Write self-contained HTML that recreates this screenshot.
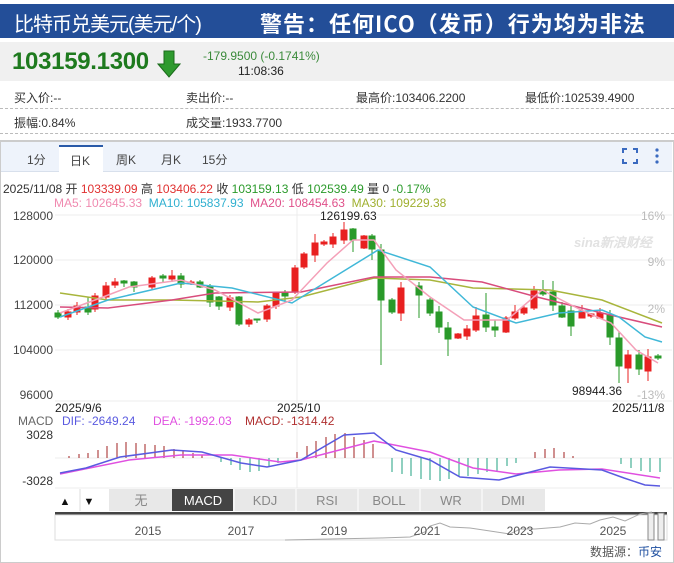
<!DOCTYPE html>
<html><head><meta charset="utf-8"><style>
*{margin:0;padding:0;box-sizing:border-box}
body{width:674px;height:563px;overflow:hidden;background:#fff;font-family:"Liberation Sans","Noto Sans CJK SC",sans-serif;position:relative;font-size:12px;color:#333}
.a{position:absolute;white-space:nowrap}
</style></head><body>
<div class="a" style="left:0;top:4px;width:674px;height:34px;background:#234e98"></div>
<div class="a" style="left:14px;top:8px;color:#fff;font-size:20px;letter-spacing:-1px">比特币兑美元(美元/个)</div>
<div class="a" style="left:260px;top:7px;color:#fff;font-size:22px;font-weight:bold;letter-spacing:1px;font-family:'Noto Sans CJK SC',sans-serif">警告：任何ICO（发币）行为均为非法</div>
<div class="a" style="left:0;top:42px;width:674px;height:39px;background:#f0f0f0"></div>
<div class="a" style="left:12px;top:48px;color:#1e7a1e;font-size:24px;font-weight:bold;letter-spacing:-0.3px">103159.1300</div>
<svg class="a" style="left:157px;top:50px" width="24" height="28"><path d="M7 1h10v13h6L12 27 1 14h6z" fill="#2e9a2e" stroke="#1a6a1a"/></svg>
<div class="a" style="left:203px;top:49px;color:#3a8a3a;font-size:12px">-179.9500 (-0.1741%)</div>
<div class="a" style="left:238px;top:64px;color:#222;font-size:12px">11:08:36</div>
<div class="a" style="left:14px;top:89px">买入价:--</div>
<div class="a" style="left:186px;top:89px">卖出价:--</div>
<div class="a" style="left:356px;top:89px">最高价:103406.2200</div>
<div class="a" style="left:525px;top:89px">最低价:102539.4900</div>
<div class="a" style="left:0;top:108px;width:674px;border-top:1px dashed #bbb"></div>
<div class="a" style="left:14px;top:114px">振幅:0.84%</div>
<div class="a" style="left:186px;top:114px">成交量:1933.7700</div>
<div class="a" style="left:0;top:133px;width:674px;border-top:1px dashed #bbb"></div>
<div class="a" style="left:0;top:140px;width:674px;height:423px;border:1px solid #ccc;border-top:2px solid #ccc"></div>
<div class="a" style="left:1px;top:142px;width:671px;height:30px;background:#eef3fb;border-bottom:1px solid #d8e0ec"></div>
<div class="a" style="left:59px;top:145px;width:44px;height:28px;background:#fff;border-top:2px solid #2a5aa8"></div>
<div class="a" style="left:27px;top:151px;color:#444">1分</div>
<div class="a" style="left:70px;top:152px;color:#444">日K</div>
<div class="a" style="left:116px;top:151px;color:#444">周K</div>
<div class="a" style="left:161px;top:151px;color:#444">月K</div>
<div class="a" style="left:202px;top:151px;color:#444">15分</div>
<svg class="a" style="left:620px;top:146px" width="45" height="20"><path d="M3 7V3h4M13 3h4v4M17 13v4h-4M7 17H3v-4" stroke="#3a6ac0" stroke-width="2" fill="none"/><circle cx="37" cy="4" r="1.6" fill="#3a6ac0"/><circle cx="37" cy="10" r="1.6" fill="#3a6ac0"/><circle cx="37" cy="16" r="1.6" fill="#3a6ac0"/></svg>
<div class="a" style="left:3px;top:180px;font-size:12px;color:#333">2025/11/08 开 <span style="color:#e03030">103339.09</span> 高 <span style="color:#e03030">103406.22</span> 收 <span style="color:#2a9a2a">103159.13</span> 低 <span style="color:#2a9a2a">102539.49</span> 量 0 <span style="color:#2a9a2a">-0.17%</span></div>
<div class="a" style="left:54px;top:196px;font-size:12px"><span style="color:#f08ab0">MA5: 102645.33</span>&nbsp; <span style="color:#30b0d0">MA10: 105837.93</span>&nbsp; <span style="color:#e0508a">MA20: 108454.63</span>&nbsp; <span style="color:#a0b030">MA30: 109229.38</span></div>
<svg class="a" style="left:0;top:0" width="674" height="563" font-family="Liberation Sans,sans-serif" font-size="12">
<g stroke="#ececec"><line x1="55" y1="215" x2="672" y2="215"/><line x1="55" y1="260" x2="672" y2="260"/><line x1="55" y1="305" x2="672" y2="305"/><line x1="55" y1="350" x2="672" y2="350"/><line x1="55" y1="401" x2="672" y2="401"/><line x1="297" y1="208" x2="297" y2="488"/><line x1="55" y1="458" x2="672" y2="458"/><line x1="55" y1="488" x2="672" y2="488"/></g>
<g fill="#444" text-anchor="end"><text x="53" y="220">128000</text><text x="53" y="264">120000</text><text x="53" y="309">112000</text><text x="53" y="354">104000</text><text x="53" y="399">96000</text></g>
<g fill="#bbb" text-anchor="end"><text x="665" y="220">16%</text><text x="665" y="266">9%</text><text x="665" y="313">2%</text><text x="665" y="399">-13%</text></g>
<text x="574" y="247" fill="#e2e2e2" font-size="13" font-style="italic" font-weight="bold">sina新浪财经</text>
<text x="320" y="220" fill="#222">126199.63</text><text x="572" y="395" fill="#222">98944.36</text>
<g id="c">
<g fill="#2a9a2a" stroke="#2a9a2a"><line x1="58" y1="310" x2="58" y2="319"/><rect x="55" y="313" width="6" height="4"/><line x1="88" y1="297" x2="88" y2="315"/><rect x="85" y="307" width="6" height="5"/><line x1="124" y1="280" x2="124" y2="287"/><rect x="121" y="281" width="6" height="2"/><line x1="134" y1="281" x2="134" y2="292"/><rect x="131" y="282" width="6" height="5"/><line x1="163" y1="274" x2="163" y2="283"/><rect x="160" y="276" width="6" height="2"/><line x1="181" y1="273" x2="181" y2="288"/><rect x="178" y="276" width="6" height="8"/><line x1="200" y1="280" x2="200" y2="288"/><rect x="197" y="282" width="6" height="5"/><line x1="210" y1="284" x2="210" y2="307"/><rect x="207" y="286" width="6" height="16"/><line x1="219" y1="296" x2="219" y2="310"/><rect x="216" y="297" width="6" height="9"/><line x1="239" y1="296" x2="239" y2="326"/><rect x="236" y="297" width="6" height="27"/><line x1="257" y1="319" x2="257" y2="323"/><rect x="254" y="319" width="6" height="1"/><line x1="285" y1="290" x2="285" y2="302"/><rect x="282" y="292" width="6" height="4"/><line x1="353" y1="228" x2="353" y2="252"/><rect x="350" y="229" width="6" height="11"/><line x1="372" y1="234" x2="372" y2="260"/><rect x="369" y="236" width="6" height="13"/><line x1="381" y1="244" x2="381" y2="365"/><rect x="378" y="250" width="6" height="50"/><line x1="392" y1="298" x2="392" y2="314"/><rect x="389" y="300" width="6" height="12"/><line x1="419" y1="282" x2="419" y2="318"/><rect x="416" y="286" width="6" height="9"/><line x1="430" y1="298" x2="430" y2="316"/><rect x="427" y="300" width="6" height="13"/><line x1="439" y1="306" x2="439" y2="333"/><rect x="436" y="312" width="6" height="15"/><line x1="448" y1="322" x2="448" y2="356"/><rect x="445" y="328" width="6" height="11"/><line x1="486" y1="293" x2="486" y2="332"/><rect x="483" y="315" width="6" height="12"/><line x1="495" y1="320" x2="495" y2="337"/><rect x="492" y="327" width="6" height="3"/><line x1="543" y1="280" x2="543" y2="296"/><rect x="540" y="291" width="6" height="3"/><line x1="553" y1="281" x2="553" y2="311"/><rect x="550" y="292" width="6" height="13"/><line x1="562" y1="302" x2="562" y2="318"/><rect x="559" y="306" width="6" height="11"/><line x1="571" y1="305" x2="571" y2="336"/><rect x="568" y="311" width="6" height="15"/><line x1="610" y1="310" x2="610" y2="345"/><rect x="607" y="315" width="6" height="22"/><line x1="619" y1="332" x2="619" y2="383"/><rect x="616" y="338" width="6" height="28"/><line x1="639" y1="350" x2="639" y2="375"/><rect x="636" y="355" width="6" height="14"/><line x1="658" y1="354" x2="658" y2="360"/><rect x="655" y="356" width="6" height="2"/></g>
<g fill="#e82020" stroke="#e82020"><line x1="68" y1="309" x2="68" y2="320"/><rect x="65" y="312" width="6" height="5"/><line x1="77" y1="302" x2="77" y2="315"/><rect x="74" y="306" width="6" height="6"/><line x1="95" y1="293" x2="95" y2="312"/><rect x="92" y="296" width="6" height="13"/><line x1="106" y1="282" x2="106" y2="299"/><rect x="103" y="286" width="6" height="11"/><line x1="115" y1="278" x2="115" y2="288"/><rect x="112" y="282" width="6" height="3"/><line x1="152" y1="276" x2="152" y2="290"/><rect x="149" y="278" width="6" height="9"/><line x1="172" y1="270" x2="172" y2="282"/><rect x="169" y="276" width="6" height="3"/><line x1="191" y1="280" x2="191" y2="285"/><rect x="188" y="282" width="6" height="1"/><line x1="230" y1="295" x2="230" y2="311"/><rect x="227" y="298" width="6" height="9"/><line x1="249" y1="318" x2="249" y2="327"/><rect x="246" y="320" width="6" height="4"/><line x1="267" y1="304" x2="267" y2="322"/><rect x="264" y="306" width="6" height="13"/><line x1="276" y1="292" x2="276" y2="309"/><rect x="273" y="293" width="6" height="13"/><line x1="295" y1="265" x2="295" y2="294"/><rect x="292" y="268" width="6" height="24"/><line x1="304" y1="252" x2="304" y2="269"/><rect x="301" y="254" width="6" height="13"/><line x1="315" y1="234" x2="315" y2="262"/><rect x="312" y="243" width="6" height="12"/><line x1="324" y1="240" x2="324" y2="246"/><rect x="321" y="242" width="6" height="2"/><line x1="333" y1="233" x2="333" y2="248"/><rect x="330" y="237" width="6" height="7"/><line x1="344" y1="222" x2="344" y2="244"/><rect x="341" y="230" width="6" height="10"/><line x1="364" y1="235" x2="364" y2="249"/><rect x="361" y="236" width="6" height="12"/><line x1="401" y1="282" x2="401" y2="321"/><rect x="398" y="288" width="6" height="25"/><line x1="458" y1="333" x2="458" y2="339"/><rect x="455" y="334" width="6" height="4"/><line x1="467" y1="325" x2="467" y2="340"/><rect x="464" y="329" width="6" height="7"/><line x1="476" y1="307" x2="476" y2="332"/><rect x="473" y="316" width="6" height="14"/><line x1="506" y1="316" x2="506" y2="333"/><rect x="503" y="318" width="6" height="14"/><line x1="515" y1="305" x2="515" y2="320"/><rect x="512" y="312" width="6" height="6"/><line x1="524" y1="305" x2="524" y2="315"/><rect x="521" y="308" width="6" height="5"/><line x1="534" y1="286" x2="534" y2="310"/><rect x="531" y="291" width="6" height="17"/><line x1="582" y1="305" x2="582" y2="318"/><rect x="579" y="311" width="6" height="7"/><line x1="591" y1="313" x2="591" y2="318"/><rect x="588" y="314" width="6" height="2"/><line x1="600" y1="308" x2="600" y2="318"/><rect x="597" y="313" width="6" height="5"/><line x1="628" y1="350" x2="628" y2="383"/><rect x="625" y="355" width="6" height="13"/><line x1="648" y1="349" x2="648" y2="381"/><rect x="645" y="357" width="6" height="14"/></g>
</g>
<g fill="none" stroke-width="1.5">
<polyline stroke="#a8b53c" points="60,293 108,300 172,300 258,302 301,297 374,278 430,280 473,288 550,290 602,300 662,323"/>
<polyline stroke="#d84c7c" points="60,307 108,308 172,300 215,293 301,292 374,277 430,277 482,282 537,297 602,313 662,327"/>
<polyline stroke="#40b8d8" points="60,317 108,300 181,283 232,288 292,303 378,250 430,267 473,307 516,323 559,313 602,310 619,317 645,337 662,342"/>
<polyline stroke="#f4a0b8" points="60,313 103,297 129,287 181,280 215,290 258,313 292,300 327,263 353,240 374,240 396,270 430,297 464,320 507,320 542,290 581,310 611,323 636,350 658,363"/>
</g>
<g fill="#222"><text x="55" y="412">2025/9/6</text><text x="277" y="412">2025/10</text><text x="612" y="412">2025/11/8</text></g>
<text x="18" y="425" fill="#666">MACD</text><text x="62" y="425" fill="#5a5ae0">DIF: -2649.24</text><text x="153" y="425" fill="#e050e0">DEA: -1992.03</text><text x="245" y="425" fill="#b03030">MACD: -1314.42</text>
<text x="53" y="439" fill="#333" text-anchor="end">3028</text><text x="53" y="485" fill="#333" text-anchor="end">-3028</text>
<g stroke="#a02020"><line x1="69" y1="458" x2="69" y2="456"/><line x1="79" y1="458" x2="79" y2="454"/><line x1="88" y1="458" x2="88" y2="453"/><line x1="98" y1="458" x2="98" y2="450"/><line x1="107" y1="458" x2="107" y2="446"/><line x1="117" y1="458" x2="117" y2="443"/><line x1="126" y1="458" x2="126" y2="442"/><line x1="136" y1="458" x2="136" y2="443"/><line x1="145" y1="458" x2="145" y2="444"/><line x1="155" y1="458" x2="155" y2="445"/><line x1="164" y1="458" x2="164" y2="446"/><line x1="174" y1="458" x2="174" y2="449"/><line x1="183" y1="458" x2="183" y2="451"/><line x1="193" y1="458" x2="193" y2="453"/><line x1="202" y1="458" x2="202" y2="455"/><line x1="297" y1="458" x2="297" y2="452"/><line x1="307" y1="458" x2="307" y2="446"/><line x1="316" y1="458" x2="316" y2="441"/><line x1="326" y1="458" x2="326" y2="437"/><line x1="335" y1="458" x2="335" y2="434"/><line x1="345" y1="458" x2="345" y2="433"/><line x1="354" y1="458" x2="354" y2="437"/><line x1="364" y1="458" x2="364" y2="440"/><line x1="373" y1="458" x2="373" y2="444"/><line x1="535" y1="458" x2="535" y2="452"/><line x1="545" y1="458" x2="545" y2="449"/><line x1="554" y1="458" x2="554" y2="448"/><line x1="564" y1="458" x2="564" y2="452"/><line x1="573" y1="458" x2="573" y2="456"/></g>
<g stroke="#20a080"><line x1="221" y1="458" x2="221" y2="462"/><line x1="231" y1="458" x2="231" y2="465"/><line x1="240" y1="458" x2="240" y2="470"/><line x1="250" y1="458" x2="250" y2="472"/><line x1="259" y1="458" x2="259" y2="471"/><line x1="269" y1="458" x2="269" y2="466"/><line x1="278" y1="458" x2="278" y2="463"/><line x1="392" y1="458" x2="392" y2="472"/><line x1="402" y1="458" x2="402" y2="474"/><line x1="411" y1="458" x2="411" y2="476"/><line x1="421" y1="458" x2="421" y2="479"/><line x1="430" y1="458" x2="430" y2="480"/><line x1="440" y1="458" x2="440" y2="481"/><line x1="449" y1="458" x2="449" y2="479"/><line x1="459" y1="458" x2="459" y2="477"/><line x1="468" y1="458" x2="468" y2="476"/><line x1="478" y1="458" x2="478" y2="474"/><line x1="487" y1="458" x2="487" y2="472"/><line x1="497" y1="458" x2="497" y2="471"/><line x1="507" y1="458" x2="507" y2="466"/><line x1="516" y1="458" x2="516" y2="463"/><line x1="621" y1="458" x2="621" y2="464"/><line x1="631" y1="458" x2="631" y2="468"/><line x1="641" y1="458" x2="641" y2="471"/><line x1="650" y1="458" x2="650" y2="472"/><line x1="660" y1="458" x2="660" y2="472"/></g>
<g fill="none" stroke-width="1.5"><polyline stroke="#e050e0" points="60,474 129,460 181,455 232,455 280,462 301,460 374,441 430,452 473,468 516,474 559,470 602,469 660,478"/><polyline stroke="#5a5ae0" points="60,473 86,468 120,457 172,450 202,452 241,463 267,467 301,460 344,435 374,433 396,450 430,460 460,477 499,480 550,467 602,470 624,478 645,485 660,486"/></g>
<rect x="55" y="489" width="490" height="22" fill="#e8e8e8"/><rect x="55" y="489" width="54" height="22" fill="#fff"/>
<rect x="172" y="489" width="61" height="22" fill="#444"/>
<g stroke="#fff"><line x1="234" y1="489" x2="234" y2="511"/><line x1="296" y1="489" x2="296" y2="511"/><line x1="358" y1="489" x2="358" y2="511"/><line x1="420" y1="489" x2="420" y2="511"/><line x1="482" y1="489" x2="482" y2="511"/><line x1="80" y1="489" x2="80" y2="511" stroke="#ddd"/></g>
<g font-size="13" text-anchor="middle" fill="#888"><text x="65" y="505" fill="#111" font-size="11">▲</text><text x="89" y="505" fill="#111" font-size="11">▼</text><text x="141" y="505">无</text><text x="203" y="505" fill="#fff">MACD</text><text x="265" y="505">KDJ</text><text x="327" y="505">RSI</text><text x="389" y="505">BOLL</text><text x="451" y="505">WR</text><text x="513" y="505">DMI</text></g>
<rect x="55" y="512" width="612" height="3" fill="#444"/>
<rect x="55" y="515" width="612" height="25" fill="#fff" stroke="#ddd"/>
<polyline fill="none" stroke="#aaa" points="285,540 330,539 380,538 410,537 425,532 430,526 440,523 450,527 470,528 490,531 510,534 520,529 535,529 560,527 575,523 590,524 600,520 613,517 625,521 640,514 652,512"/>
<g fill="#555" text-anchor="middle"><text x="148" y="535">2015</text><text x="241" y="535">2017</text><text x="334" y="535">2019</text><text x="427" y="535">2021</text><text x="520" y="535">2023</text><text x="613" y="535">2025</text></g>
<rect x="648" y="513" width="6" height="27" fill="#eee" stroke="#888"/><rect x="658" y="513" width="6" height="27" fill="#eee" stroke="#888"/>
<text x="590" y="556" fill="#555">数据源：<tspan fill="#2050a0">币安</tspan></text>
</svg>
</body></html>
